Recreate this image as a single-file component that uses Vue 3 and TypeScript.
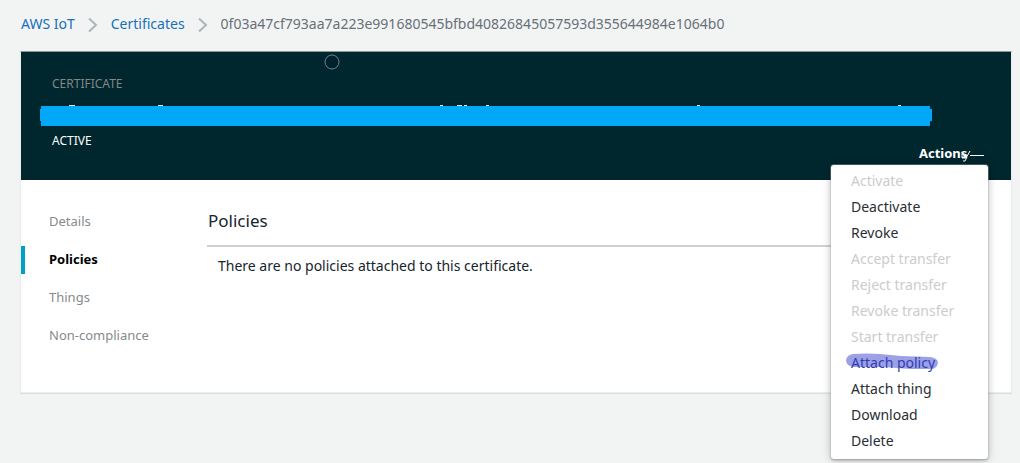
<script setup lang="ts">
interface MenuItem {
  label: string
  disabled?: boolean
  marked?: boolean
}

const certificateId = '0f03a47cf793aa7a223e991680545bfbd40826845057593d355644984e1064b0'
const tabs: string[] = ['Details', 'Policies', 'Things', 'Non-compliance']
const activeTab = 'Policies'

const actions: MenuItem[] = [
  { label: 'Activate', disabled: true },
  { label: 'Deactivate' },
  { label: 'Revoke' },
  { label: 'Accept transfer', disabled: true },
  { label: 'Reject transfer', disabled: true },
  { label: 'Revoke transfer', disabled: true },
  { label: 'Start transfer', disabled: true },
  { label: 'Attach policy', marked: true },
  { label: 'Attach thing' },
  { label: 'Download' },
  { label: 'Delete' },
]
</script>

<template>
  <div class="page">
    <nav class="crumbs" aria-label="Breadcrumb">
      <a href="#">AWS IoT</a>
      <svg class="sep" viewBox="0 0 10 16" aria-hidden="true"><path d="M1 1.500L8 8L1 14.500" /></svg>
      <a href="#">Certificates</a>
      <svg class="sep" viewBox="0 0 10 16" aria-hidden="true"><path d="M1 1.500L8 8L1 14.500" /></svg>
      <span class="current">{{ certificateId }}</span>
    </nav>

    <main class="card">
      <header class="hero">
        <svg class="ring" viewBox="0 0 16 16" aria-hidden="true"><circle cx="8" cy="8" r="7" /></svg>
        <p class="kind">CERTIFICATE</p>
        <svg class="bar" viewBox="0 0 892 22" preserveAspectRatio="none" aria-hidden="true">
          <path class="tips" d="M29 1h6v2h-6zM118 1h5v2h-5zM400 1h3v2h-3zM417 1h5v2h-5zM424 1h3v2h-3zM446 1h3v2h-3zM657 1h3v2h-3zM858 1h3v2h-3z" />
          <path class="fill" d="M1 2H890V5H892V17H890V22H1V17H0V5H1Z" />
        </svg>
        <p class="status">ACTIVE</p>
        <div class="actions">
          <button type="button" class="toggle" aria-haspopup="menu" aria-expanded="true">
            Actions
            <svg class="caret" viewBox="0 0 24 12" aria-hidden="true">
              <path d="M2 2L6 8L10 1M7 7L5 11H3M1 5H7M2 8H6" />
              <path d="M10 5.500H24" />
            </svg>
          </button>
          <div class="menu" role="menu">
            <button v-for="item in actions" :key="item.label" type="button" role="menuitem" class="item" :class="{ marked: item.marked }" :disabled="item.disabled">
              {{ item.label }}
              <svg v-if="item.marked" class="marker" viewBox="0 0 92 17" aria-hidden="true">
                <path d="M7 1Q20 0 34 1L55 3L84 4Q92 5 92 10Q91 16 84 16L64 16L38 14L8 14Q0 13 0 7Q1 2 7 1Z" />
              </svg>
            </button>
          </div>
        </div>
      </header>

      <div class="body">
        <nav class="tabs" aria-label="Certificate sections">
          <a v-for="tab in tabs" :key="tab" href="#" class="tab" :class="{ active: tab === activeTab }">{{ tab }}</a>
        </nav>
        <section class="content">
          <h1>Policies</h1>
          <p>There are no policies attached to this certificate.</p>
        </section>
      </div>
    </main>
  </div>
</template>

<style>
body {
  background: #f2f4f4;
}
</style>

<style scoped>
.page {
  box-sizing: border-box;
  min-height: 100vh;
  padding: 14px 8px 0 20px;
  font-family: "Noto Sans", "Open Sans", sans-serif;
  font-size: 14px;
  line-height: 20px;
  color: #16252d;
}
p,
h1 {
  margin: 0;
  font-weight: 400;
}
a {
  text-decoration: none;
}
button {
  font: inherit;
  border: 0;
  padding: 0;
  background: none;
}
.crumbs {
  display: flex;
  align-items: center;
  padding-left: 1px;
  height: 20px;
}
.crumbs a {
  color: #1670ba;
}
.crumbs .current {
  color: #687078;
}
.sep {
  width: 10px;
  height: 16px;
  margin: 2px 13px 0;
  fill: none;
  stroke: #aab7b8;
  stroke-width: 2;
}
.card {
  margin-top: 17px;
  background: #fff;
  border: 1px solid #eaeded;
  border-top-color: #879596;
  box-shadow: 0 1px 1px #dfe2e2;
}
.hero {
  position: relative;
  box-sizing: border-box;
  height: 128px;
  padding: 22px 79px 0 31px;
  background: #00262e;
  color: #fff;
  font-size: 12px;
}
.ring {
  position: absolute;
  left: 303px;
  top: 2px;
  width: 16px;
  height: 16px;
  fill: #00222f;
  stroke: #75828f;
}
.kind {
  color: #848788;
}
.bar {
  display: block;
  box-sizing: border-box;
  width: calc(100% + 12px);
  height: 22px;
  margin: 10px 0 5px -12px;
}
.tips {
  fill: #dfe6e8;
}
.fill {
  fill: #00a8f7;
}
.actions {
  position: absolute;
  top: 91px;
  right: 23px;
  width: 157px;
}
.toggle {
  display: flex;
  align-items: center;
  margin-left: 88px;
  height: 20px;
  color: #fff;
  font-size: 13px;
  font-weight: 700;
}
.caret {
  width: 24px;
  height: 12px;
  margin: 6px 0 0 -7px;
  fill: none;
  stroke: #fff;
}
.menu {
  position: absolute;
  z-index: 1;
  top: 22px;
  left: 0;
  right: 0;
  padding: 3px 0 5px;
  background: #fff;
  border-radius: 3px;
  box-shadow: 0 0 0 1px #c4c7c855, 0 1px 2px #00000055, 0 1px 8px #00000044;
}
.item {
  position: relative;
  display: block;
  width: 100%;
  height: 26px;
  padding-left: 20px;
  color: #292e33;
  font-size: 14px;
  text-align: left;
}
.item:disabled {
  color: #ccc;
}
.marked {
  color: #303f9f;
}
.marker {
  position: absolute;
  left: 15px;
  top: 3px;
  width: 92px;
  height: 17px;
  fill: #3038c8;
  fill-opacity: 0.48;
}
.body {
  display: flex;
  min-height: 212px;
}
.tabs {
  display: flex;
  flex-direction: column;
  gap: 10px;
  width: 186px;
  padding-top: 28px;
}
.tab {
  padding: 0 0 2px 24px;
  border-left: 4px solid transparent;
  line-height: 26px;
  font-size: 13px;
  color: #858a8c;
}
.active {
  color: #000;
  font-weight: 700;
  border-color: #00a1c9;
}
.content {
  flex: 1;
  margin-right: 30px;
}
.content h1 {
  padding: 29px 1px 12px;
  border-bottom: 2px solid #d1d1d1;
  font-size: 17px;
  line-height: 24px;
}
.content p {
  padding: 9px 11px;
}
</style>
